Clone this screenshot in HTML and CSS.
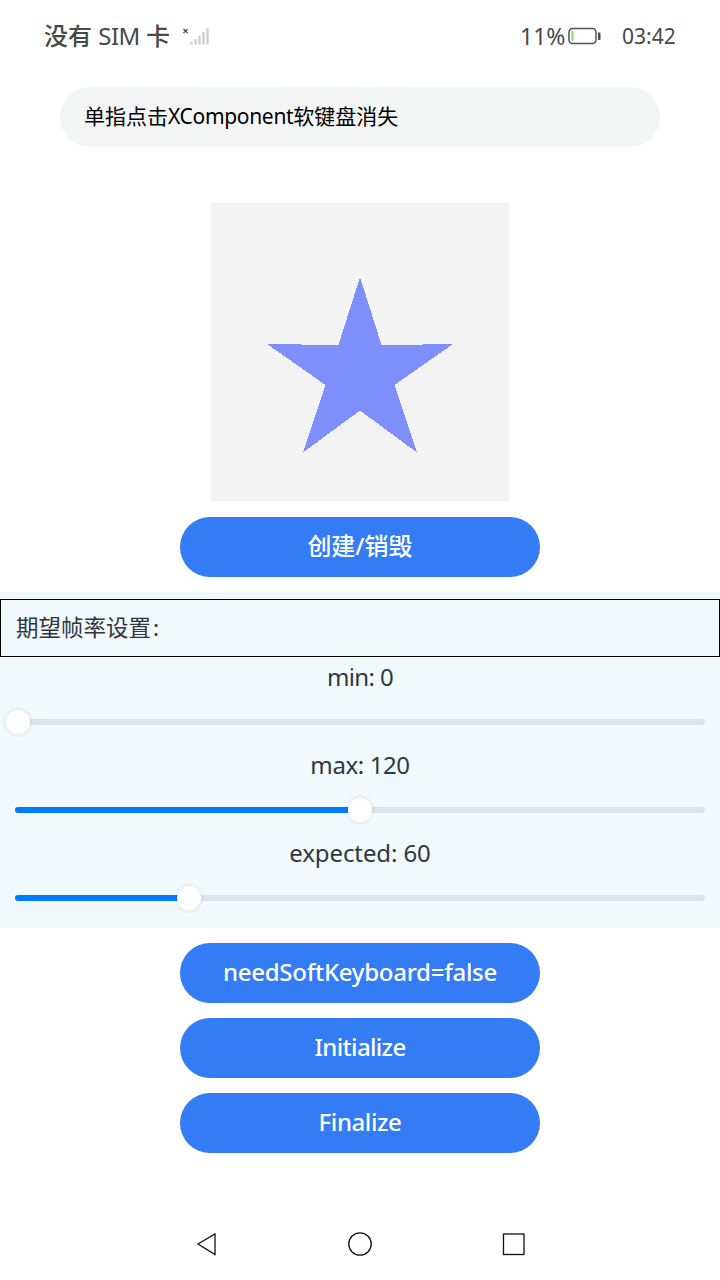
FILE: index.html
```
<!DOCTYPE html>
<html lang="zh-CN">
<head>
<meta charset="utf-8">
<title>XComponent</title>
<link rel="stylesheet" href="styles.css">
</head>
<body>
<div class="screen">
  <header class="status">
    <span class="carrier">没有 <span class="sim">SIM</span> 卡</span>
    <svg class="signal" width="28" height="24" viewBox="0 0 28 24">
      <path d="M1.500 5l4 4M5.500 5l-4 4" stroke="#444" stroke-width="1.200"/>
      <path d="M9.500 18v2.500M13.500 15v5.500M17.500 12v8.500M21.500 8v12.500M25.500 4.500v16" stroke="#cfcfcf" stroke-width="2.400"/>
    </svg>
    <span class="percent">11%</span>
    <svg class="battery" width="34" height="18" viewBox="0 0 34 18">
      <rect x="1" y="1.500" width="27" height="15" rx="3.500" fill="#fff" stroke="#505050" stroke-width="1.500"/>
      <rect x="3.500" y="4" width="2" height="10" rx="1" fill="#8bd67b"/>
      <rect x="30" y="5.500" width="2.500" height="7.500" rx=".5" fill="#505050"/>
    </svg>
    <span class="clock">03:42</span>
  </header>
  <main class="content">
    <div class="field"><span class="field-text">单指点击<span class="field-latin">XComponent</span>软键盘消失</span></div>
    <svg class="surface" width="298" height="298" viewBox="0 0 298 298">
      <polygon shape-rendering="crispEdges" fill="#7e8ffb" points="149,74 170.500,142 212,142 212,141 242,141 183.500,182 206,249.500 149,207.500 92,249.500 114.500,182 56,141 90,141 90,142 127.500,142"/>
    </svg>
    <button class="btn btn-create">创建/销毁</button>
    <section class="panel">
      <div class="panel-title">期望帧率设置<span class="colon">:</span></div>
      <div class="row">
        <div class="label label-min">min: 0</div>
        <div class="slider"><div class="track"></div><div class="thumb" style="left:18px"></div></div>
      </div>
      <div class="row">
        <div class="label label-max">max: 120</div>
        <div class="slider"><div class="track"><div class="fill" style="width:345px"></div></div><div class="thumb" style="left:360px"></div></div>
      </div>
      <div class="row">
        <div class="label label-expected">expected: 60</div>
        <div class="slider"><div class="track"><div class="fill" style="width:174px"></div></div><div class="thumb" style="left:189px"></div></div>
      </div>
    </section>
    <div class="actions">
      <button class="btn btn-keyboard">needSoftKeyboard=false</button>
      <button class="btn btn-init">Initialize</button>
      <button class="btn btn-final">Finalize</button>
    </div>
  </main>
  <nav class="nav">
    <svg width="26" height="26" viewBox="0 0 26 26"><path d="M4 13L21 3V23.500Z"/></svg>
    <svg width="26" height="26" viewBox="0 0 26 26"><circle cx="13" cy="13" r="11.200"/></svg>
    <svg width="26" height="26" viewBox="0 0 26 26"><rect x="3.500" y="3" width="20.500" height="20.500"/></svg>
  </nav>
</div>
</body>
</html>
```
FILE: styles.css
```
* { box-sizing: border-box; }
body {
  margin: 0;
  background: #fff;
  font-family: "Noto Sans", "Noto Sans CJK SC", sans-serif;
}
.screen {
  display: flex;
  flex-direction: column;
  width: 720px;
  height: 1280px;
  overflow: hidden;
}
.status {
  display: flex;
  align-items: center;
  height: 71px;
  padding: 0 44px;
  color: #484848;
  font-size: 24px;
  line-height: 36px;
  white-space: nowrap;
}
.carrier { width: 126px; font-weight: 500; }
.sim { font-weight: 400; letter-spacing: -.5px; }
.signal { margin-left: 12px; }
.percent { width: 48px; margin-left: auto; font-size: 23px; }
.battery { margin-right: 20px; }
.clock { width: 54px; font-size: 21px; }
.content {
  display: flex;
  flex-direction: column;
  align-items: center;
  flex: 1;
  padding-top: 16px;
}
.field {
  display: flex;
  align-items: center;
  width: 600px;
  height: 60px;
  padding: 0 24px 2px;
  border-radius: 30px;
  background: #f3f5f4;
  color: #000;
  font-size: 21px;
  line-height: 30px;
  white-space: nowrap;
}
.field-latin { letter-spacing: -.32px; }
.surface {
  display: block;
  margin-top: 56px;
  background: #f3f3f3;
}
.btn {
  display: flex;
  align-items: center;
  justify-content: center;
  width: 360px;
  height: 60px;
  padding: 0 0 3px;
  border: 0;
  border-radius: 30px;
  background: #347bf6;
  color: #fff;
  font: 500 24px/32px "Noto Sans", "Noto Sans CJK SC", sans-serif;
  white-space: nowrap;
}
.btn-create { margin-top: 16px; }
.btn-keyboard { letter-spacing: -.27px; }
.btn-init { letter-spacing: -.65px; }
.btn-final { letter-spacing: -.4px; }
.panel {
  width: 720px;
  height: 336px;
  margin-top: 15px;
  padding-top: 7px;
  background: #f1f9fd;
  color: #303641;
}
.panel-title {
  height: 58px;
  padding: 0 15px;
  border: 1px solid #000;
  font-size: 22.5px;
  line-height: 56px;
}
.colon { margin-left: 2px; }
.row { height: 88px; }
.label {
  height: 42px;
  font-size: 24px;
  line-height: 40px;
  text-align: center;
}
.label-min { letter-spacing: -.65px; }
.label-max { letter-spacing: -.4px; }
.label-expected { letter-spacing: -.1px; }
.slider {
  position: relative;
  display: flex;
  align-items: center;
  height: 46px;
  padding: 0 15px;
}
.track {
  flex: 1;
  height: 6px;
  border-radius: 3px;
  background: #dce4e7;
  overflow: hidden;
}
.fill { height: 6px; background: #007dff; }
.thumb {
  position: absolute;
  top: 11px;
  width: 24px;
  height: 24px;
  margin-left: -12px;
  border-radius: 50%;
  background: #fff;
  box-shadow: 0 0 5px rgba(0, 0, 0, .12);
}
.actions {
  display: flex;
  flex-direction: column;
  gap: 15px;
  margin-top: 15px;
}
.nav {
  display: flex;
  justify-content: space-between;
  align-items: center;
  height: 72px;
  padding: 0 194px;
}
.nav svg { fill: none; stroke: #111; stroke-width: 1.3; }
```
